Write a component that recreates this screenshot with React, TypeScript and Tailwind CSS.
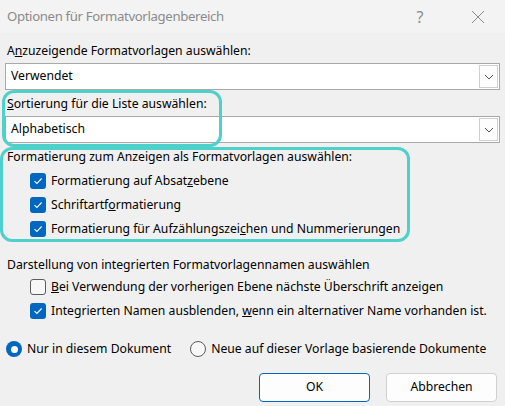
import React from "react";

const font = { fontFamily: '"Noto Sans", "Open Sans", sans-serif' };

function Chevron() {
  return (
    <svg width="10" height="6" viewBox="0 0 10 6" fill="none">
      <path d="M1 1l4 4 4-4" stroke="#555" strokeWidth="1" />
    </svg>
  );
}

function Select({ value }: { value: string }) {
  return (
    <div className="flex h-[27px] items-stretch border border-[#a9a9a9] bg-white">
      <div className="flex flex-1 items-center pl-[5px] text-black">{value}</div>
      <div className="m-[1px] flex w-[19px] items-center justify-center border border-[#d0d0d0] bg-[#fdfdfd]">
        <Chevron />
      </div>
    </div>
  );
}

function Check({ checked }: { checked: boolean }) {
  if (checked)
    return (
      <div className="flex h-[16px] w-[16px] shrink-0 items-center justify-center rounded-[3px] bg-[#0067c0]">
        <svg width="10" height="8" viewBox="0 0 10 8" fill="none">
          <path d="M1.5 4.2l2.4 2.3L8.6 1.5" stroke="white" strokeWidth="1.1" />
        </svg>
      </div>
    );
  return <div className="h-[16px] w-[16px] shrink-0 rounded-[3px] border border-[#5c5c5c] bg-[#f7f7f7]" />;
}

function Radio({ checked }: { checked: boolean }) {
  if (checked)
    return (
      <div className="flex h-[16px] w-[16px] items-center justify-center rounded-full bg-[#0067c0]">
        <div className="h-[7px] w-[7px] rounded-full bg-white" />
      </div>
    );
  return <div className="h-[16px] w-[16px] rounded-full border border-[#5c5c5c] bg-[#f7f7f7]" />;
}

function CbRow({ checked, children }: { checked: boolean; children: React.ReactNode }) {
  return (
    <div className="flex h-[24px] items-center whitespace-nowrap pl-[25px]">
      <Check checked={checked} />
      <span className="ml-[5px]">{children}</span>
    </div>
  );
}

export default function App() {
  return (
    <div className="relative h-[406px] w-[505px] overflow-hidden bg-[#f0f0f0] text-[12.2px] text-black" style={font}>
      <div className="flex h-[33px] items-center bg-[#f3f3f3] pl-[7px] text-[13.2px] tracking-[-0.35px] text-[#8b8b8b]">
        <span className="flex-1">Optionen für Formatvorlagenbereich</span>
        <span className="mr-[48px] text-[16px] text-[#8b8b8b]">?</span>
        <svg width="14" height="14" viewBox="0 0 14 14" className="mr-[20px]">
          <path d="M1 1l12 12M13 1L1 13" stroke="#8b8b8b" strokeWidth="1" />
        </svg>
      </div>
      <div className="px-[5px]">
        <div className="mt-[8px] flex h-[20px] items-center pl-[2px]">
          A<u>n</u>zuzeigende Formatvorlagen auswählen:
        </div>
        <div className="mt-[2px]">
          <Select value="Verwendet" />
        </div>
        <div className="mt-[4px] flex h-[20px] items-center pl-[2px]">
          <u>S</u>ortierung für die Liste auswählen:
        </div>
        <div className="mt-[2px]">
          <Select value="Alphabetisch" />
        </div>
        <div className="mt-[4px] flex h-[20px] items-center pl-[2px]">
          Formatierung zum Anzeigen als Formatvorlagen auswählen:
        </div>
        <div className="mt-[2px]">
          <CbRow checked>
            Formatierung auf Absat<u>z</u>ebene
          </CbRow>
          <CbRow checked>
            Schriftartf<u>o</u>rmatierung
          </CbRow>
          <CbRow checked>
            Formatierung für Aufzählungszei<u>c</u>hen und Nummerierungen
          </CbRow>
        </div>
        <div className="mt-[14px] flex h-[20px] items-center pl-[2px]">
          Darstellung von integrierten Formatvorlagennamen auswählen
        </div>
        <CbRow checked={false}>
          <u>B</u>ei Verwendung der vorherigen Ebene nächste Überschrift anzeigen
        </CbRow>
        <CbRow checked>
          Integrierten Namen ausblenden, <u>w</u>enn ein alternativer Name vorhanden ist.
        </CbRow>
        <div className="mt-[14px] flex h-[24px] items-center whitespace-nowrap pl-[1px]">
          <Radio checked />
          <span className="ml-[5px]">Nur in diesem Dokument</span>
          <div className="ml-[19px]">
            <Radio checked={false} />
          </div>
          <span className="ml-[5px]">Neue auf dieser Vorlage basierende Dokumente</span>
        </div>
        <div className="mt-[12px] flex justify-end gap-[16px] pr-[3px]">
          <button className="flex h-[29px] w-[111px] items-center justify-center rounded-[4px] border border-[#0067c0] bg-[#fdfdfd]">
            OK
          </button>
          <button className="flex h-[29px] w-[111px] items-center justify-center rounded-[4px] border border-[#d0d0d0] bg-[#fdfdfd]">
            Abbrechen
          </button>
        </div>
      </div>
      <div className="pointer-events-none absolute left-[2px] top-[90px] h-[57px] w-[220px] rounded-[12px] border-[3px] border-[#4fd1cb]" />
      <div className="pointer-events-none absolute left-0 top-[147px] h-[95px] w-[410px] rounded-[12px] border-[3px] border-[#4fd1cb]" />
    </div>
  );
}
